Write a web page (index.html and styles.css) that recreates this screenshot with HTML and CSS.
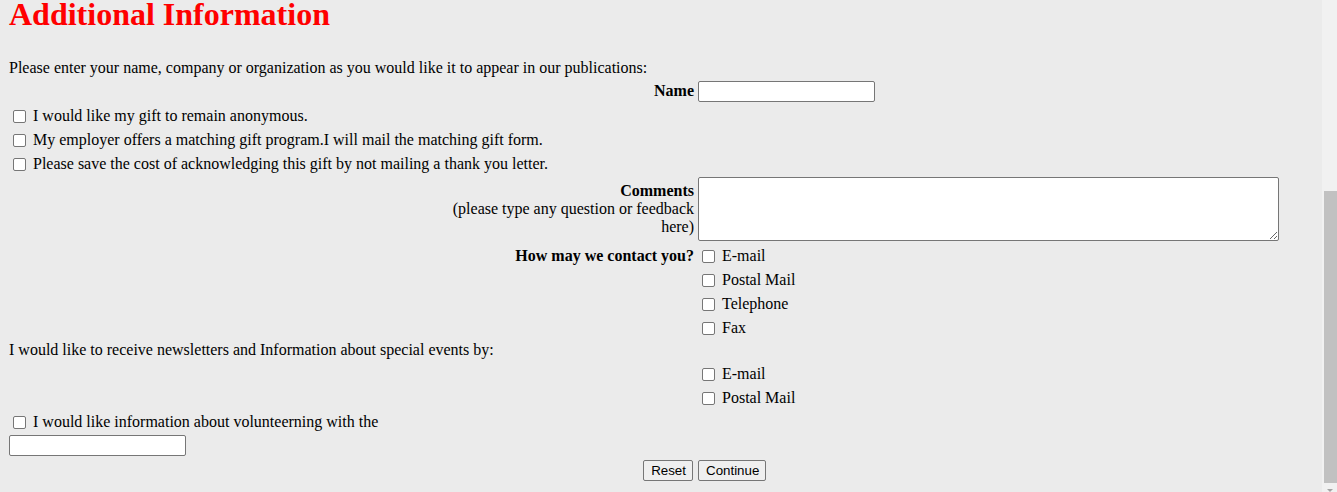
FILE: index.html
```html
<!DOCTYPE html>
<html lang="en">
<head>
<meta charset="utf-8">
<title>Additional Information</title>
<link rel="stylesheet" href="styles.css">
</head>
<body>
<main class="page">
  <h1 class="title">Additional Information</h1>
  <form class="form">
    <p class="full line intro">Please enter your name, company or organization as you would like it to appear in our publications:</p>

    <label class="label" for="name">Name</label>
    <div class="field"><input id="name" class="text" type="text"></div>

    <label class="full check"><input type="checkbox">I would like my gift to remain anonymous.</label>
    <label class="full check"><input type="checkbox">My employer offers a matching gift program.I will mail the matching gift form.</label>
    <label class="full check"><input type="checkbox">Please save the cost of acknowledging this gift by not mailing a thank you letter.</label>

    <label class="label multi" for="comments"><span class="multi-text"><b>Comments</b><br>(please type any question or feedback<br>here)</span></label>
    <div class="field area"><textarea id="comments"></textarea></div>

    <div class="label top">How may we contact you?</div>
    <div class="list">
      <label class="check"><input type="checkbox">E-mail</label>
      <label class="check"><input type="checkbox">Postal Mail</label>
      <label class="check"><input type="checkbox">Telephone</label>
      <label class="check"><input type="checkbox">Fax</label>
    </div>

    <p class="full line news">I would like to receive newsletters and Information about special events by:</p>
    <div class="list col2">
      <label class="check"><input type="checkbox">E-mail</label>
      <label class="check"><input type="checkbox">Postal Mail</label>
    </div>

    <label class="full check"><input type="checkbox">I would like information about volunteerning with the</label>
    <div class="full volunteer"><input class="text" type="text"></div>

    <div class="actions-left"><button type="reset" class="btn">Reset</button></div>
    <div class="actions-right"><button type="button" class="btn">Continue</button></div>
  </form>
</main>
<div class="scrollbar"><div class="thumb"></div><div class="arrow"></div></div>
</body>
</html>
```
FILE: styles.css
```css
html {
  background: #ebebeb;
  overflow: hidden;
}
body {
  margin: 0;
  font-family: "Liberation Serif", "Times New Roman", serif;
  font-size: 16px;
  color: #000;
}
.page {
  padding: 0 24px 0 9px;
}
.title {
  margin: -4px 0 0;
  height: 37px;
  line-height: 37px;
  font-size: 32px;
  font-weight: bold;
  color: #ff0000;
}
.form {
  display: grid;
  grid-template-columns: 685px 1fr;
  column-gap: 4px;
  margin-top: 23px;
}
.full {
  grid-column: 1 / -1;
}
.line {
  margin: 0;
  display: flex;
  align-items: center;
}
.intro {
  height: 23px;
}
.news {
  height: 22px;
}
.label {
  box-sizing: border-box;
  display: flex;
  align-items: center;
  justify-content: flex-end;
  text-align: right;
  height: 24px;
  font-weight: bold;
}
.label.top {
  align-self: start;
  padding-top: 2px;
}
.label.multi {
  height: auto;
  font-weight: normal;
  align-self: center;
}
.multi-text {
  display: block;
  text-align: right;
}
.field {
  display: flex;
  align-items: center;
  height: 24px;
}
.field.area {
  height: auto;
  padding: 2px 0;
}
.text {
  box-sizing: border-box;
  width: 177px;
  height: 21px;
  margin: 0;
  padding: 1px 2px;
  border: 1px solid #767676;
  border-radius: 2px;
  background: #fff;
  font-family: "Liberation Sans", Arial, sans-serif;
  font-size: 13.33px;
}
textarea {
  box-sizing: border-box;
  width: 581px;
  height: 64px;
  margin: 0;
  padding: 2px;
  border: 1px solid #767676;
  border-radius: 2px;
  background: #fff;
  font-family: "Liberation Mono", monospace;
  font-size: 13.33px;
}
.check {
  box-sizing: border-box;
  display: flex;
  align-items: center;
  height: 24px;
  padding-top: 2px;
}
.check input {
  -webkit-appearance: none;
  appearance: none;
  box-sizing: border-box;
  flex: none;
  width: 13px;
  height: 13px;
  margin: 0 7px 0 4px;
  border: 1px solid #767676;
  border-radius: 2px;
  background: #fff;
}
.list {
  display: flex;
  flex-direction: column;
}
.col2 {
  grid-column: 2;
}
.volunteer {
  padding-top: 2px;
  height: 23px;
}
.actions-left {
  display: flex;
  justify-content: flex-end;
  padding: 2px 1px 0 0;
}
.actions-right {
  display: flex;
  padding-top: 2px;
}
.btn {
  box-sizing: border-box;
  height: 21px;
  margin: 0;
  padding: 1px 6px 1px 7px;
  border: 1px solid #767676;
  border-radius: 2px;
  background: #efefef;
  color: #000;
  font-family: "Liberation Sans", Arial, sans-serif;
  font-size: 13.33px;
}
.scrollbar {
  position: fixed;
  top: 0;
  right: 0;
  width: 15px;
  height: 100%;
  background: #f1f1f1;
}
.thumb {
  position: absolute;
  top: 191px;
  right: 0;
  width: 13px;
  height: 292px;
  background: #c1c1c1;
}
.arrow {
  position: absolute;
  bottom: 0;
  left: 5px;
  width: 0;
  height: 0;
  border-left: 3.5px solid transparent;
  border-right: 3.5px solid transparent;
  border-top: 3px solid #a3a3a3;
}
```
